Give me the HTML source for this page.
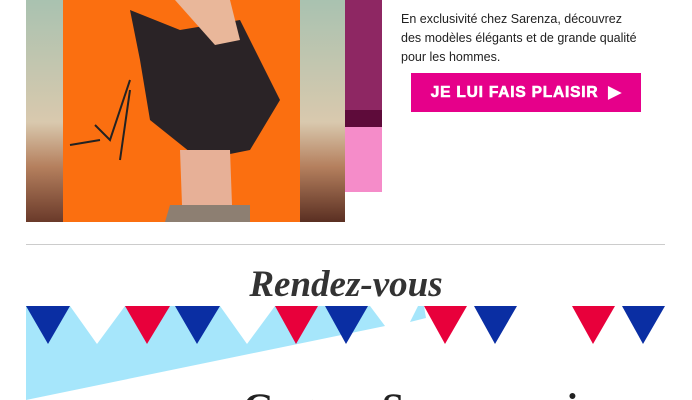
<!DOCTYPE html>
<html style="overflow:hidden;height:400px"><head><meta charset="utf-8"><style>
body{margin:0;width:692px;height:400px;overflow:hidden;background:#fff;position:relative;font-family:"Liberation Sans",Arial,sans-serif}
.a{position:absolute}
</style></head><body>
<div class="a" style="left:26px;top:0;width:37px;height:222px;background:linear-gradient(#a9c2b0,#d9c9ae 55%,#b5805e 75%,#6a3a2a)"></div>
<div class="a" style="left:63px;top:0;width:237px;height:222px;background:#fb6f10"></div>
<div class="a" style="left:300px;top:0;width:45px;height:222px;background:linear-gradient(#a9c2b0,#d9c9ae 55%,#b5805e 75%,#5a2f22)"></div>
<div class="a" style="left:345px;top:0;width:37px;height:110px;background:#8e2763"></div>
<div class="a" style="left:345px;top:110px;width:37px;height:17px;background:#5e0b3a"></div>
<div class="a" style="left:345px;top:127px;width:37px;height:65px;background:#f58cc9"></div>
<svg class="a" style="left:0;top:0" width="692" height="400">
<path d="M130 10 L180 30 L240 20 L280 100 L250 150 L200 160 L150 120 L140 60 Z" fill="#2a2326"/>
<path d="M175 0 L230 0 L240 40 L215 45 Z" fill="#e9b79a"/>
<path d="M180 150 L230 150 L232 205 L182 205 Z" fill="#e7b097"/>
<path d="M170 205 L250 205 L250 222 L165 222 Z" fill="#8d7f72"/>
<path d="M130 80 L110 140 L95 125 M130 90 L120 160 M100 140 L70 145" stroke="#222" stroke-width="2" fill="none"/>
</svg>
<div class="a" style="left:401px;top:10px;font-size:12.5px;line-height:19px;color:#222">En exclusivité chez Sarenza, découvrez<br>des modèles élégants et de grande qualité<br>pour les hommes.</div>
<div class="a" style="left:411px;top:73px;width:230px;height:39px;background:#e6008a;color:#fff;font-weight:bold;font-size:15.5px;line-height:39px;text-align:center;letter-spacing:0.8px;-webkit-text-stroke:0.6px #fff">JE LUI FAIS PLAISIR &nbsp;▶</div>
<div class="a" style="left:26px;top:244px;width:639px;height:1px;background:#ccc"></div>
<div class="a" style="left:0;width:692px;top:265px;text-align:center;font-family:'Liberation Serif',serif;font-style:italic;font-weight:bold;font-size:37px;line-height:40px;color:#333">Rendez-vous</div>
<svg class="a" style="left:0;top:0" width="692" height="400">
<path d="M26 306 L70 306 L97 344 L125 306 L220 306 L247 344 L275 306 L370 306 L385 326 L26 400 Z" fill="#a6e6fb"/>
<path d="M410 322 L418 306 L424 306 L426 318 Z" fill="#a6e6fb"/>
<g fill="#0a2ea3"><path d="M26 306H70L48 344Z"/><path d="M175 306H220L197 344Z"/><path d="M325 306H368L346 344Z"/><path d="M474 306H517L495 344Z"/><path d="M622 306H665L643 344Z"/></g>
<g fill="#e8003b"><path d="M125 306H170L147 344Z"/><path d="M275 306H318L296 344Z"/><path d="M424 306H467L445 344Z"/><path d="M572 306H615L593 344Z"/></g>
</svg>
<div class="a" style="left:0;top:380px;width:692px;height:20px;overflow:hidden">
<div class="a" style="left:243px;top:5px;font-family:'Liberation Serif',serif;font-weight:bold;font-size:40px;line-height:46px;color:#222;white-space:nowrap">Gagnez Sarenza suivez</div>
</div>
</body></html>
